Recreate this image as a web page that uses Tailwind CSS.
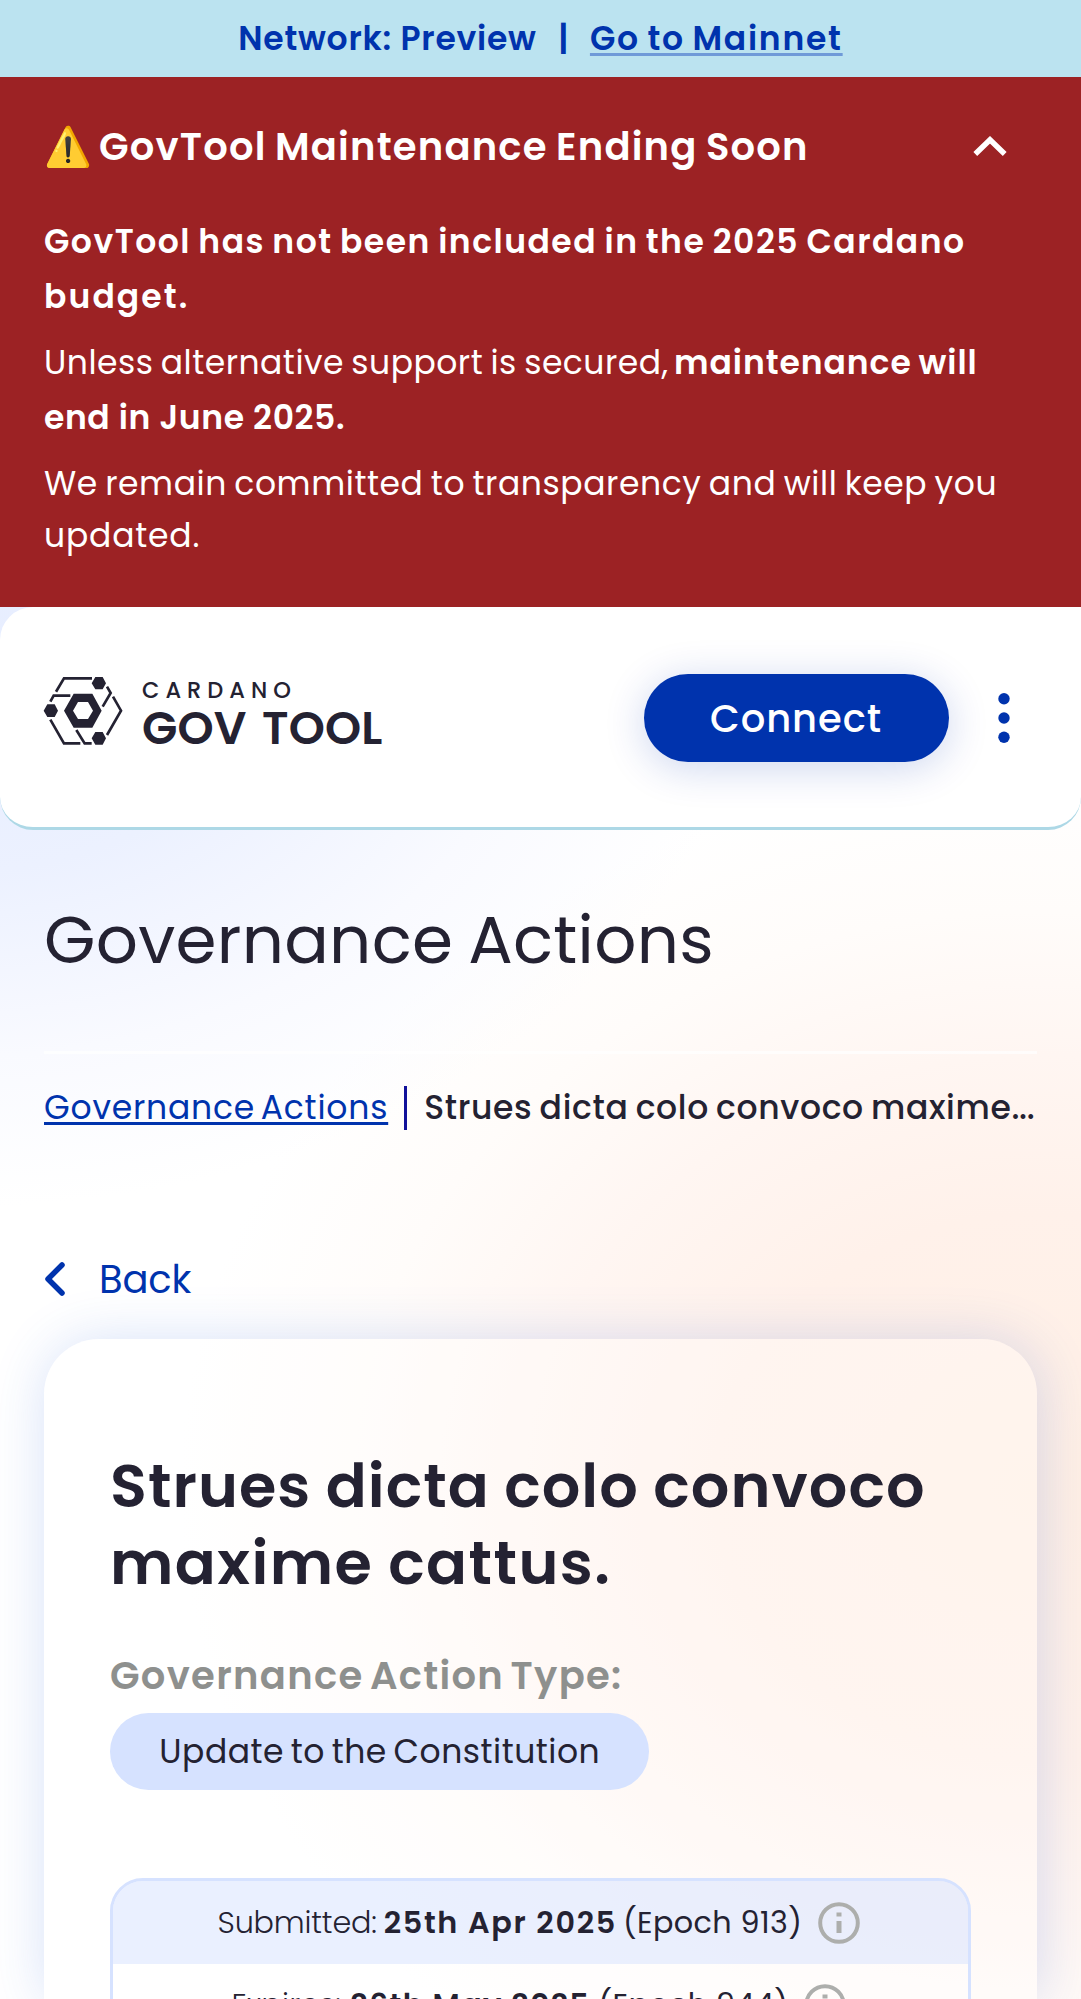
<!DOCTYPE html>
<html lang="en">
<head>
<meta charset="utf-8">
<title>GovTool</title>
<script src="https://cdn.jsdelivr.net/npm/@tailwindcss/browser@4"></script>
</head>
<body class="h-[1999px] overflow-hidden bg-white font-['Poppins','Inter',sans-serif] text-[33px] text-[#242232]">
  <div class="flex h-[77px] items-center justify-center whitespace-pre bg-[#bbe3f0] font-semibold text-[#0033ad]">
    <span class="tracking-[0.75px]">Network: Preview</span><span class="mx-[21.5px]">|</span><a class="tracking-[1.75px] [word-spacing:-2px] underline decoration-[#6f9ad8] decoration-[3px] underline-offset-[3px]">Go to Mainnet</a>
  </div>

  <section class="h-[530px] bg-[#9c2224] px-[44px] pt-[41px] text-white">
    <div class="flex h-[58px] items-center justify-between pr-[30px]">
      <h2 class="whitespace-nowrap text-[38.5px] font-semibold leading-[58px] tracking-[1.2px] [word-spacing:-2px]"><span class="mr-[9px] inline-block w-[46px] tracking-normal">⚠️</span>GovTool Maintenance Ending Soon</h2>
      <svg class="-mt-[2px] h-[20px] w-[34px]" viewBox="0 0 33 20" fill="none" stroke="currentColor" stroke-width="5.5"><path d="M1.8 18 16.5 3.8 31.2 18"/></svg>
    </div>
    <p class="mt-[38px] whitespace-nowrap font-semibold leading-[55px] tracking-[1.5px] [word-spacing:-2px]">GovTool has not been included in the 2025 Cardano<br><span class="tracking-[2.1px]">budget.</span></p>
    <p class="mt-[11px] whitespace-nowrap leading-[55px] tracking-[0.5px] [word-spacing:-2px]">Unless alternative support is secured, <b class="-ml-[2px] font-semibold tracking-[0.95px]">maintenance will<br><span class="tracking-[0.6px] [word-spacing:0px]">end in June 2025.</span></b></p>
    <p class="mt-[13px] whitespace-nowrap leading-[52px] tracking-[0.57px] [word-spacing:-2px]">We remain committed to transparency and will keep you<br><span class="tracking-[0.8px]">updated.</span></p>
  </section>

  <div class="h-[1392px] bg-[radial-gradient(ellipse_780px_540px_at_-40px_60px,#e6edff_0%,#ecf1ff_38%,#f9faff_72%,#ffffff00_100%),radial-gradient(ellipse_860px_720px_at_1040px_880px,#ffefe4_0%,#fff1ea_38%,#fff6f2_60%,#fffcfa_80%,#ffffff00_100%)]">
    <header class="flex h-[223px] justify-between rounded-[33px] border-b-[3px] border-[#add8e6] bg-white pl-[43px] pr-[71px]">
      <div class="flex pt-[69px]">
        <svg class="h-[69.4px] w-[80px]" viewBox="40 18 240 208" fill="#242232">
          <path fill-rule="evenodd" d="M103 122 132 71H188L216 122 188 173H132ZM130 122 145 147H175L190 122 175 96H145Z"/>
          <path d="M186 40 197 21H219L229 40 219 58H197ZM42 122 53 103H75L85 122 75 141H53ZM186 205 197 186H219L229 205 219 224H197Z"/>
          <path fill="none" stroke="#242232" stroke-width="8" d="M79 65 103 25H187M62 95 72 77H122M232 50 243 69 219 110M250 80 274 122 232 195M62 149 103 220H152M140 180 165 220H186"/>
        </svg>
        <div class="ml-[19px] whitespace-nowrap">
          <div class="text-[22.5px] font-medium leading-[29px] tracking-[6px]">CARDANO</div>
          <div class="text-[46px] font-semibold leading-[47px] tracking-[0.2px] [word-spacing:4px]">GOV TOOL</div>
        </div>
      </div>
      <div class="mt-[66.5px] flex h-[88px] items-center self-start">
        <button class="h-[88px] w-[305px] rounded-full bg-[#0033ad] pr-[1px] pt-[2px] text-[38.5px] font-medium tracking-[0.9px] text-white shadow-[0_6px_41px_rgba(0,51,173,0.2)]">Connect</button>
        <svg class="ml-[49px] h-[50px] w-[12px]" viewBox="0 0 12 50" fill="#0033ad"><circle cx="6" cy="5.8" r="5.7"/><circle cx="6" cy="25" r="5.7"/><circle cx="6" cy="44.2" r="5.7"/></svg>
      </div>
    </header>

    <main class="px-[44px]">
      <h1 class="pt-[66px] text-[66px] leading-[88px] tracking-[0.3px] [word-spacing:-3px]">Governance Actions</h1>
      <div class="mt-[66.5px] h-[3px] bg-white/70"></div>
      <nav class="mt-[29px] flex h-[50px] items-center whitespace-nowrap">
        <a class="tracking-[0.8px] text-[#0033ad] underline decoration-[3px] underline-offset-[3px] [word-spacing:-4px]">Governance Actions</a>
        <div class="ml-[16px] mr-[17px] h-[44px] w-[3px] bg-[#11119a]"></div>
        <span class="font-medium tracking-[0.65px] [word-spacing:-2px]">Strues dicta colo convoco maxime<span class="tracking-[-0.3px]">...</span></span>
      </nav>
      <a class="mt-[118px] flex h-[58px] items-center text-[38.5px] text-[#0033ad]">
        <svg class="-mt-[2px] h-[36px] w-[22px]" viewBox="0 0 22 36" fill="none" stroke="currentColor" stroke-width="5.5" stroke-linecap="round" stroke-linejoin="round"><path d="M18 4 4 18 18 32"/></svg>
        <span class="ml-[33px] tracking-[-0.2px]">Back</span>
      </a>
      <article class="mt-[30px] h-[660px] rounded-t-[55px] bg-white/30 px-[66px] pt-[108.5px] shadow-[2px_2px_55px_rgba(47,98,220,0.2)]">
        <h2 class="whitespace-nowrap text-[60.5px] font-semibold leading-[77px] tracking-[1.05px] [word-spacing:-1px]">Strues dicta colo convoco<br><span class="tracking-[1.45px]">maxime cattus.</span></h2>
        <div class="mt-[46px] text-[38.5px] font-semibold leading-[58px] tracking-[1.3px] text-[#8e908e] [word-spacing:-4px]">Governance Action Type:</div>
        <div class="mt-[8px] flex h-[76.5px] w-[538.5px] items-center justify-center rounded-full bg-[#d6e2ff] pl-[1px] tracking-[0.5px] [word-spacing:-2.5px]">Update to the Constitution</div>
        <div class="mt-[88px] h-[170px] overflow-hidden rounded-t-[33px] border-[3px] border-[#d6e2ff] text-[30.25px]">
          <div class="flex h-[83px] items-center justify-center whitespace-nowrap bg-[#d6e2ff]/50 pr-[3px] pt-[2px]">
            <span class="font-light tracking-[-0.2px]">Submitted:</span>
            <b class="ml-[7px] font-semibold tracking-[1.7px]">25th Apr 2025</b>
            <span class="ml-[6px] tracking-[0.4px]">(Epoch 913)</span>
            <svg class="ml-[16px] size-[42px]" viewBox="0 0 42 42" fill="#adaeac"><circle cx="21" cy="21" r="18.8" fill="none" stroke="#adaeac" stroke-width="4"/><path d="M18.5 10.5h5v4h-5zM18.5 19h5v12h-5z"/></svg>
          </div>
          <div class="flex h-[82.5px] items-center justify-center whitespace-nowrap bg-white/30 pr-[3px]">
            <span class="font-light tracking-[0.3px]">Expires:</span>
            <b class="ml-[9px] font-semibold tracking-[1.35px]">26th May 2025</b>
            <span class="ml-[8px] tracking-[0.4px]">(Epoch 944)</span>
            <svg class="ml-[16px] size-[42px]" viewBox="0 0 42 42" fill="#adaeac"><circle cx="21" cy="21" r="18.8" fill="none" stroke="#adaeac" stroke-width="4"/><path d="M18.5 10.5h5v4h-5zM18.5 19h5v12h-5z"/></svg>
          </div>
        </div>
      </article>
    </main>
  </div>
</body>
</html>
